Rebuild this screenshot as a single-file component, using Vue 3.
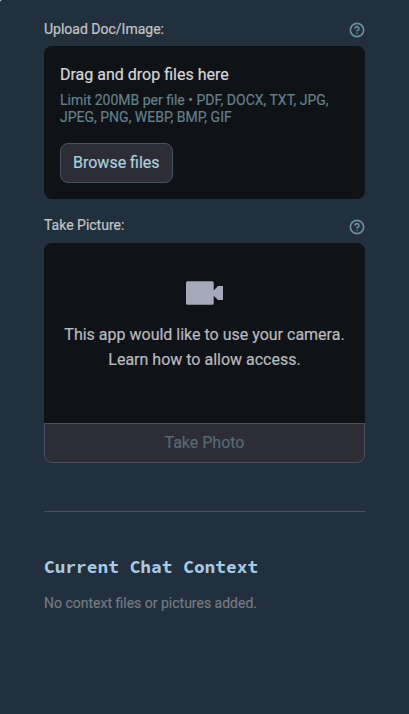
<script setup>
const formats = ['PDF', 'DOCX', 'TXT', 'JPG', 'JPEG', 'PNG', 'WEBP', 'BMP', 'GIF']
const limitText = `Limit 200MB per file • ${formats.join(', ')}`
</script>

<template>
  <aside class="sidebar">
    <section class="field upload">
      <div class="label-row">
        <label>Upload Doc/Image:</label>
        <svg class="help" viewBox="0 0 24 24">
          <circle cx="12" cy="12" r="10" />
          <path d="M9.09 9a3 3 0 0 1 5.83 1c0 2-3 3-3 3M12 17h.01" />
        </svg>
      </div>
      <div class="dropzone">
        <span class="drop-title">Drag and drop files here</span>
        <small class="drop-limit">{{ limitText }}</small>
        <button class="browse">Browse files</button>
      </div>
    </section>

    <section class="field">
      <div class="label-row picture-label">
        <label>Take Picture:</label>
        <svg class="help" viewBox="0 0 24 24">
          <circle cx="12" cy="12" r="10" />
          <path d="M9.09 9a3 3 0 0 1 5.83 1c0 2-3 3-3 3M12 17h.01" />
        </svg>
      </div>
      <div class="camera">
        <svg class="video" viewBox="0 0 38 24">
          <path d="M1.5 .3H26.2a1.5 1.5 0 0 1 1.5 1.5V9.4L32 5h5v14H32l-4.3-4.2v7.4a1.5 1.5 0 0 1-1.5 1.5H1.5A1.5 1.5 0 0 1 0 22.2V1.8A1.5 1.5 0 0 1 1.5 .3Z" />
        </svg>
        <p>This app would like to use your camera.</p>
        <p>Learn how to allow access.</p>
      </div>
      <button class="take" disabled>Take Photo</button>
    </section>

    <hr />
    <h3>Current Chat Context</h3>
    <p class="caption">No context files or pictures added.</p>
  </aside>
</template>

<style>
body {
  margin: 0;
  background: #fff;
}
</style>

<style scoped>
.sidebar {
  box-sizing: border-box;
  height: 714px;
  padding: 18px 44px 0;
  overflow: hidden;
  border-top-left-radius: 2px;
  background: #222f3c;
  color: #c3c5c7;
  font-family: Roboto, sans-serif;
  font-size: 16px;
  -webkit-text-stroke: 0.2px currentColor;
}
.label-row {
  display: flex;
  justify-content: space-between;
  height: 28px;
  font-size: 14px;
  line-height: 22px;
}
.help {
  width: 16px;
  height: 16px;
  margin-top: 4px;
  fill: none;
  stroke: #6b909c;
  stroke-width: 2.5;
  stroke-linecap: round;
  stroke-linejoin: round;
}
.dropzone {
  display: flex;
  flex-direction: column;
  align-items: flex-start;
  box-sizing: border-box;
  height: 153px;
  padding: 16px;
  border-radius: 8px;
  background: #0f1216;
}
.drop-title {
  color: #d6d7d7;
  line-height: 25px;
}
.drop-limit {
  margin-top: 5px;
  color: #63808a;
  font-size: 14px;
  line-height: 17px;
}
button {
  box-sizing: border-box;
  height: 40px;
  border: 1px solid #48525e;
  background: #2d2d38;
  font: 16px/24px Roboto, sans-serif;
  -webkit-text-stroke: inherit;
}
.browse {
  margin-top: 17px;
  padding: 0 12px;
  border-radius: 8px;
  color: #a9d1df;
}
.picture-label {
  height: 29px;
  margin-top: 15px;
}
.picture-label .help {
  margin-top: 5px;
}
.camera {
  display: flex;
  flex-direction: column;
  align-items: center;
  box-sizing: border-box;
  height: 180px;
  padding-top: 38px;
  border-radius: 8px 8px 0 0;
  background: #0f1216;
  color: #b9babc;
}
.video {
  width: 38px;
  height: 24px;
  margin-bottom: 17px;
  fill: #a5a9ba;
}
.camera p {
  margin: 0;
  line-height: 25px;
}
.take {
  display: block;
  width: 100%;
  border-radius: 0 0 8px 8px;
  color: #566974;
}
hr {
  height: 1px;
  margin: 48px 0 0;
  border: 0;
  background: #47515d;
}
h3 {
  margin: 43px 0 0;
  color: #a5cae3;
  font: 700 17.85px/24px "Source Code Pro", "Noto Sans Mono CJK SC", "DejaVu Sans Mono", monospace;
  white-space: nowrap;
  -webkit-text-stroke: 0;
}
.caption {
  margin: 13px 0 0;
  color: #747a80;
  font-size: 14px;
  line-height: 22px;
}
</style>
